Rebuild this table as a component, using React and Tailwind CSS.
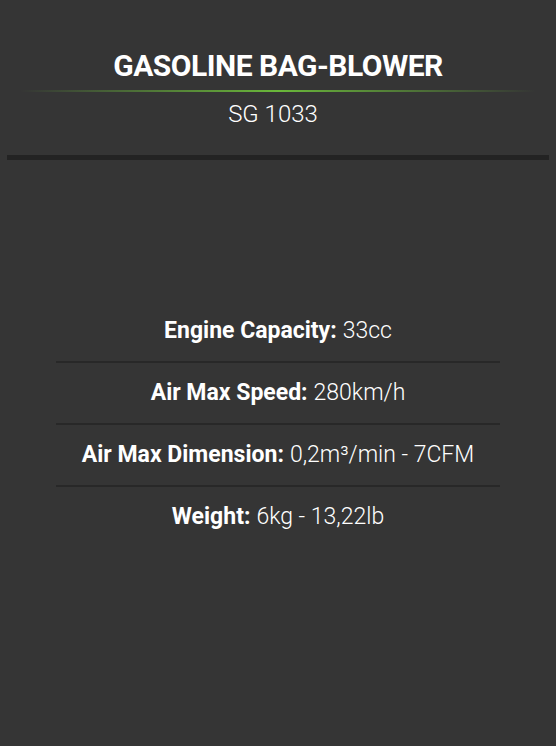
import React from "react";

const specs = [
  { label: "Engine Capacity:", value: "33cc" },
  { label: "Air Max Speed:", value: "280km/h" },
  { label: "Air Max Dimension:", value: "0,2m³/min - 7CFM" },
  { label: "Weight:", value: "6kg - 13,22lb" },
];

export default function App() {
  return (
    <div
      className="min-h-[746px] w-full bg-[#353535] text-white"
      style={{ fontFamily: "Roboto, 'Liberation Sans', sans-serif" }}
    >
      <div className="px-[7px] pt-[46px]">
        <h1 className="text-center text-[30px] font-bold leading-[40px] tracking-[-0.5px]">
          GASOLINE BAG-BLOWER
        </h1>
        <div className="mx-[13px] mt-[4px] h-[2px] bg-[linear-gradient(90deg,rgba(106,184,58,0)_0%,#6ab83a_50%,rgba(106,184,58,0)_100%)]" />
        <div className="mt-[7px] text-center text-[24px] font-light leading-[30px] pr-[10px]">
          SG 1033
        </div>
        <div className="mt-[26px] h-[5px] bg-[#232323]" />
      </div>

      <div className="mx-auto mt-[141px] w-[444px]">
        {specs.map((s, i) => (
          <div
            key={s.label}
            className={`flex items-center justify-center pt-[15px] pb-[15px] text-[23px] leading-[30px] ${
              i < specs.length - 1 ? "border-b-2 border-[#282828]" : ""
            }`}
          >
            <span className="font-bold">{s.label}</span>
            <span className="ml-[6px] font-light">{s.value}</span>
          </div>
        ))}
      </div>
    </div>
  );
}
